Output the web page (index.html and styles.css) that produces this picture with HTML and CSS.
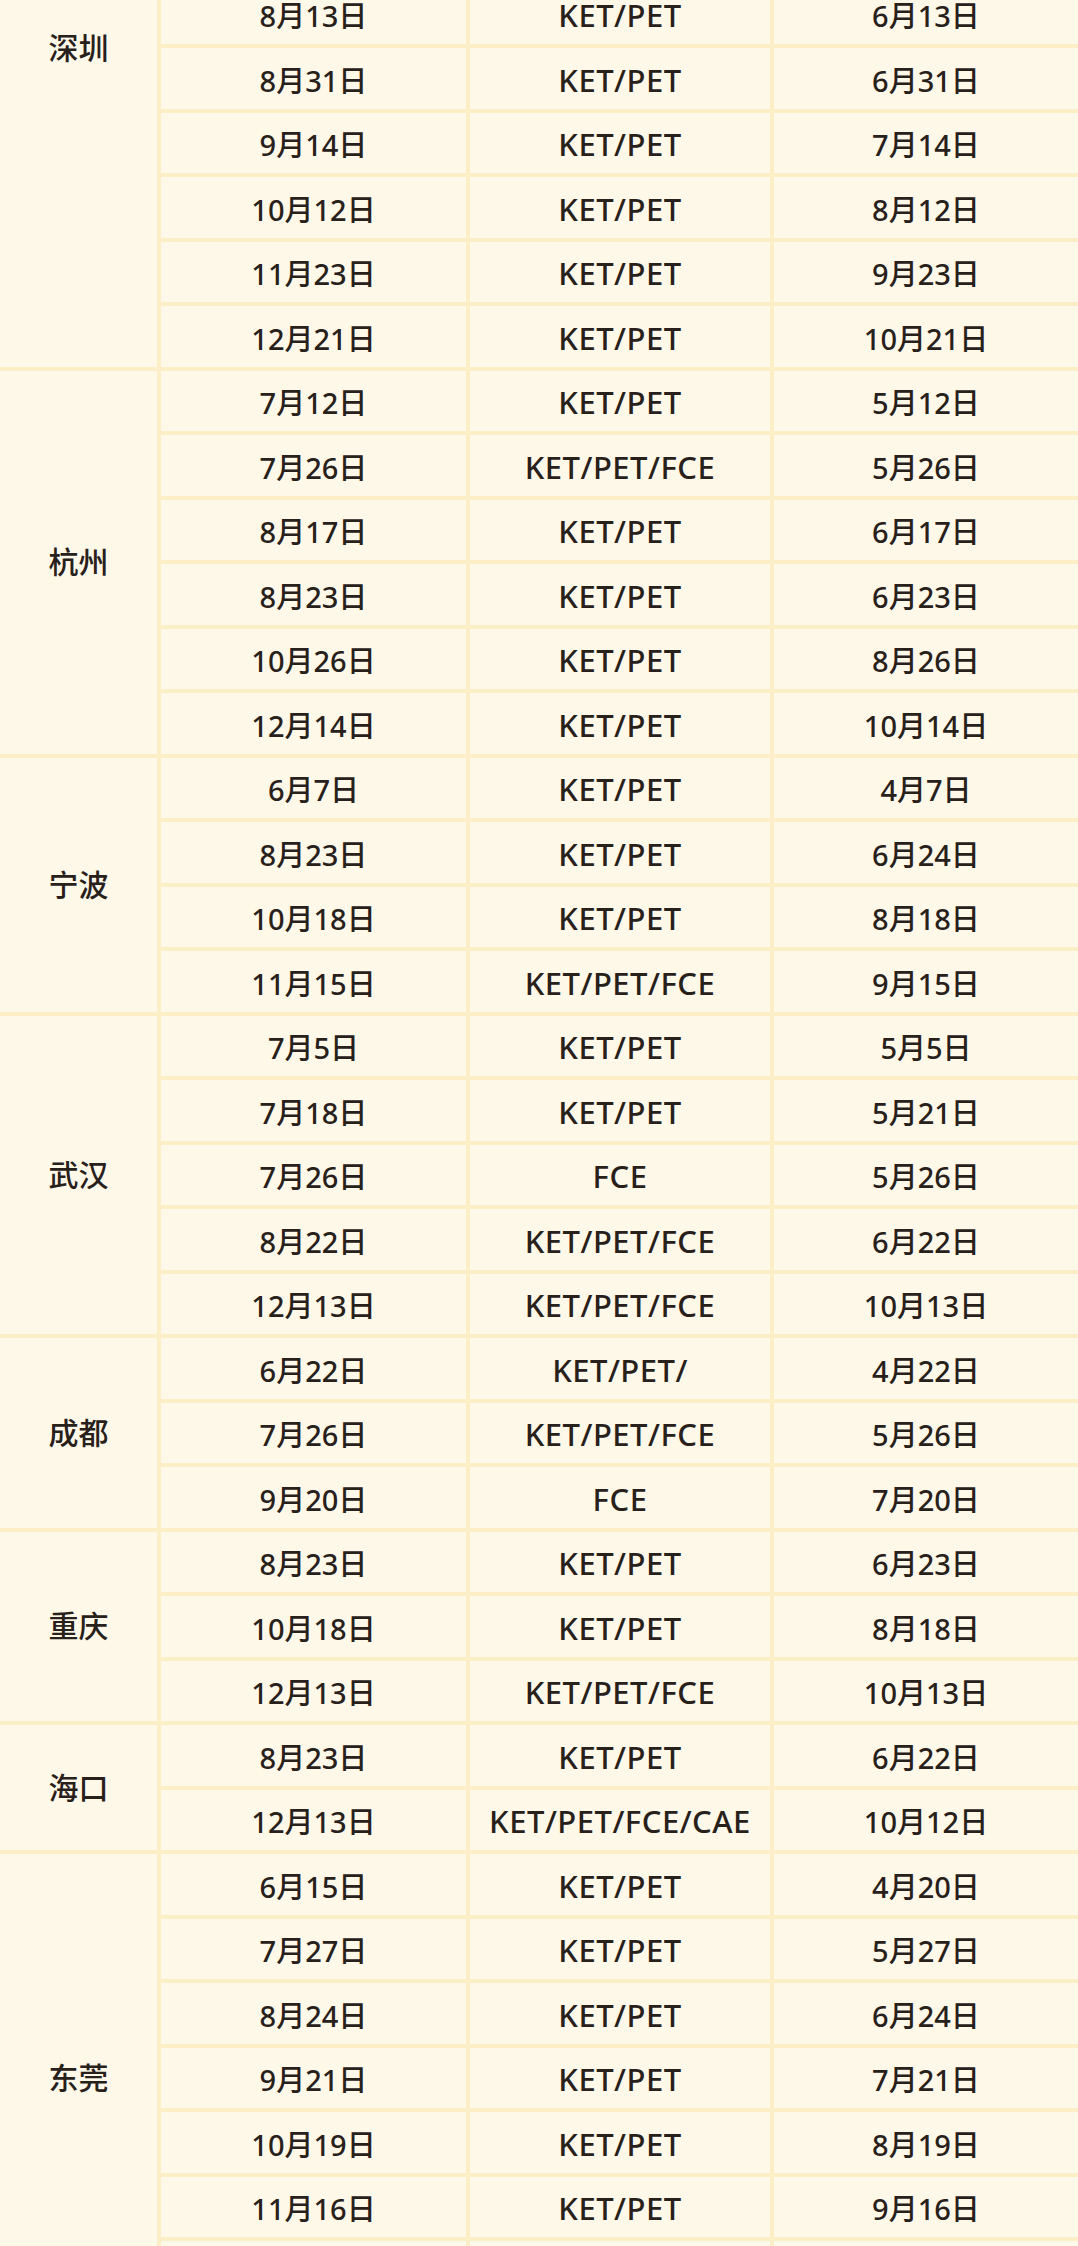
FILE: index.html
```html
<!DOCTYPE html>
<html lang="zh-CN">
<head>
<meta charset="utf-8">
<title>考试时间表</title>
<link rel="stylesheet" href="styles.css">
</head>
<body>
<div class="table">
  <div class="city span-6 first">深圳</div>
  <div class="cell">8月13日</div><div class="cell exam">KET/PET</div><div class="cell">6月13日</div>
  <div class="cell">8月31日</div><div class="cell exam">KET/PET</div><div class="cell">6月31日</div>
  <div class="cell">9月14日</div><div class="cell exam">KET/PET</div><div class="cell">7月14日</div>
  <div class="cell">10月12日</div><div class="cell exam">KET/PET</div><div class="cell">8月12日</div>
  <div class="cell">11月23日</div><div class="cell exam">KET/PET</div><div class="cell">9月23日</div>
  <div class="cell">12月21日</div><div class="cell exam">KET/PET</div><div class="cell">10月21日</div>

  <div class="city span-6">杭州</div>
  <div class="cell">7月12日</div><div class="cell exam">KET/PET</div><div class="cell">5月12日</div>
  <div class="cell">7月26日</div><div class="cell exam">KET/PET/FCE</div><div class="cell">5月26日</div>
  <div class="cell">8月17日</div><div class="cell exam">KET/PET</div><div class="cell">6月17日</div>
  <div class="cell">8月23日</div><div class="cell exam">KET/PET</div><div class="cell">6月23日</div>
  <div class="cell">10月26日</div><div class="cell exam">KET/PET</div><div class="cell">8月26日</div>
  <div class="cell">12月14日</div><div class="cell exam">KET/PET</div><div class="cell">10月14日</div>

  <div class="city span-4">宁波</div>
  <div class="cell">6月7日</div><div class="cell exam">KET/PET</div><div class="cell">4月7日</div>
  <div class="cell">8月23日</div><div class="cell exam">KET/PET</div><div class="cell">6月24日</div>
  <div class="cell">10月18日</div><div class="cell exam">KET/PET</div><div class="cell">8月18日</div>
  <div class="cell">11月15日</div><div class="cell exam">KET/PET/FCE</div><div class="cell">9月15日</div>

  <div class="city span-5">武汉</div>
  <div class="cell">7月5日</div><div class="cell exam">KET/PET</div><div class="cell">5月5日</div>
  <div class="cell">7月18日</div><div class="cell exam">KET/PET</div><div class="cell">5月21日</div>
  <div class="cell">7月26日</div><div class="cell exam">FCE</div><div class="cell">5月26日</div>
  <div class="cell">8月22日</div><div class="cell exam">KET/PET/FCE</div><div class="cell">6月22日</div>
  <div class="cell">12月13日</div><div class="cell exam">KET/PET/FCE</div><div class="cell">10月13日</div>

  <div class="city span-3">成都</div>
  <div class="cell">6月22日</div><div class="cell exam">KET/PET/</div><div class="cell">4月22日</div>
  <div class="cell">7月26日</div><div class="cell exam">KET/PET/FCE</div><div class="cell">5月26日</div>
  <div class="cell">9月20日</div><div class="cell exam">FCE</div><div class="cell">7月20日</div>

  <div class="city span-3">重庆</div>
  <div class="cell">8月23日</div><div class="cell exam">KET/PET</div><div class="cell">6月23日</div>
  <div class="cell">10月18日</div><div class="cell exam">KET/PET</div><div class="cell">8月18日</div>
  <div class="cell">12月13日</div><div class="cell exam">KET/PET/FCE</div><div class="cell">10月13日</div>

  <div class="city span-2">海口</div>
  <div class="cell">8月23日</div><div class="cell exam">KET/PET</div><div class="cell">6月22日</div>
  <div class="cell">12月13日</div><div class="cell exam">KET/PET/FCE/CAE</div><div class="cell">10月12日</div>

  <div class="city span-7">东莞</div>
  <div class="cell">6月15日</div><div class="cell exam">KET/PET</div><div class="cell">4月20日</div>
  <div class="cell">7月27日</div><div class="cell exam">KET/PET</div><div class="cell">5月27日</div>
  <div class="cell">8月24日</div><div class="cell exam">KET/PET</div><div class="cell">6月24日</div>
  <div class="cell">9月21日</div><div class="cell exam">KET/PET</div><div class="cell">7月21日</div>
  <div class="cell">10月19日</div><div class="cell exam">KET/PET</div><div class="cell">8月19日</div>
  <div class="cell">11月16日</div><div class="cell exam">KET/PET</div><div class="cell">9月16日</div>
  <div class="cell"></div><div class="cell"></div><div class="cell"></div>
</div>
</body>
</html>
```

FILE: styles.css
```css
html, body {
  margin: 0;
  padding: 0;
  background: #fdf0c9;
}

body {
  overflow: hidden;
  height: 2246px;
}

.table {
  display: grid;
  grid-template-columns: 157px 305px 300px 304px;
  grid-auto-rows: 60.5px;
  gap: 4px;
  margin-top: -16.5px;
  background: #fcefc7;
  font-family: "Noto Sans", "Noto Sans CJK SC", sans-serif;
  font-size: 29px;
  font-weight: 500;
  color: #28201a;
}

.cell,
.city {
  background: #fef8e8;
  display: flex;
  align-items: center;
  justify-content: center;
  line-height: 1;
}

.cell {
  padding-top: 4px;
  box-sizing: border-box;
}

.exam {
  font-size: 31px;
  letter-spacing: 0.5px;
}

.city {
  grid-column: 1;
  font-size: 30px;
}

.city.first {
  align-items: flex-start;
  padding-top: 49px;
}

.span-2 { grid-row: span 2; }
.span-3 { grid-row: span 3; }
.span-4 { grid-row: span 4; }
.span-5 { grid-row: span 5; }
.span-6 { grid-row: span 6; }
.span-7 { grid-row: span 7; }
```
